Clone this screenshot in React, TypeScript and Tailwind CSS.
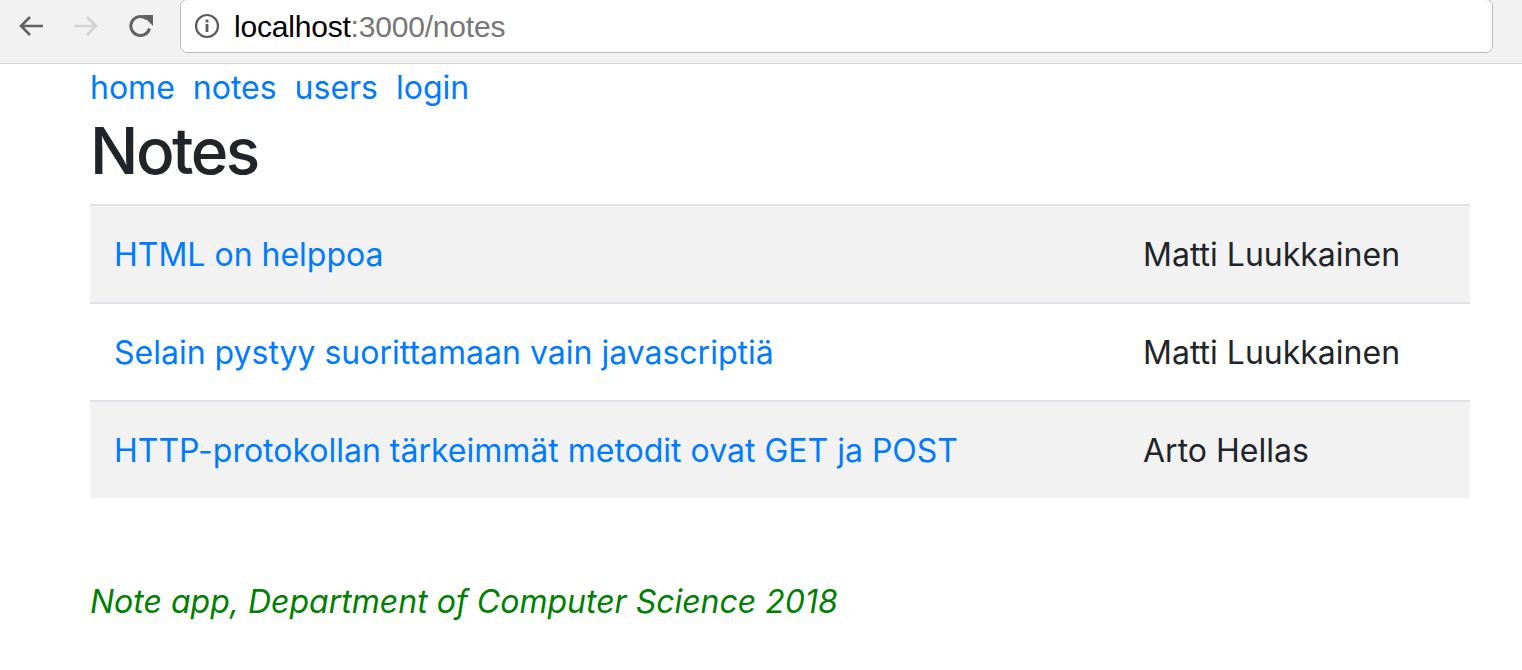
import React from "react";

const notes = [
  { title: "HTML on helppoa", user: "Matti Luukkainen" },
  { title: "Selain pystyy suorittamaan vain javascriptiä", user: "Matti Luukkainen" },
  { title: "HTTP-protokollan tärkeimmät metodit ovat GET ja POST", user: "Arto Hellas" },
];

function Back({ color }: { color: string }) {
  return (
    <svg width="28" height="28" viewBox="0 0 28 28" fill="none">
      <path d="M26 14H4M13 5L4 14L13 23" stroke={color} strokeWidth="2.6" />
    </svg>
  );
}

function Forward({ color }: { color: string }) {
  return (
    <svg width="28" height="28" viewBox="0 0 28 28" fill="none">
      <path d="M2 14H24M15 5L24 14L15 23" stroke={color} strokeWidth="2.6" />
    </svg>
  );
}

function Reload() {
  return (
    <svg width="28" height="28" viewBox="0 0 28 28" fill="none">
      <path d="M22.5 16.5A9.5 9.5 0 1 1 19.5 6.8" stroke="#626262" strokeWidth="3" />
      <path d="M15 3H26V14Z" fill="#626262" />
    </svg>
  );
}

function Info() {
  return (
    <svg width="26" height="26" viewBox="0 0 26 26" fill="none">
      <circle cx="13" cy="13" r="11" stroke="#5a5a5a" strokeWidth="2.2" />
      <rect x="11.6" y="11" width="2.8" height="8" fill="#5a5a5a" />
      <rect x="11.6" y="6.6" width="2.8" height="2.8" fill="#5a5a5a" />
    </svg>
  );
}

export default function App() {
  return (
    <div className="w-[1522px] h-[670px] bg-white overflow-hidden">
      <div className="h-[64px] bg-[#f2f2f2] border-b border-[#d6d6d6] flex items-start">
        <div className="flex items-center h-[52px] pl-[17px] gap-[27px]">
          <Back color="#626262" />
          <Forward color="#d2d2d2" />
          <Reload />
        </div>
        <div className="ml-[25px] mt-[-1px] w-[1313px] h-[54px] bg-white border border-[#bdbdbd] rounded-[7px] flex items-center pl-[13px]">
          <Info />
          <span className="ml-[14px] mt-[2px] text-[30px] leading-none font-['Liberation_Sans',Arial,sans-serif] tracking-[-0.2px]">
            <span className="text-black">localhost</span>
            <span className="text-[#777777]">:3000/notes</span>
          </span>
        </div>
      </div>

      <div className="ml-[90px] w-[1380px] font-['Inter','Noto_Sans',sans-serif] text-[#212529] text-[32px] leading-[48px]">
        <nav className="h-[48px] flex">
          <a className="text-[#007bff] pr-[18px]" href="#">home</a>
          <a className="text-[#007bff] pr-[18px]" href="#">notes</a>
          <a className="text-[#007bff] pr-[18px]" href="#">users</a>
          <a className="text-[#007bff]" href="#">login</a>
        </nav>
        <h2 className="text-[64px] leading-[78px] font-medium tracking-[-2.5px] mb-[14px]">Notes</h2>
        <table className="w-[1380px] border-collapse">
          <tbody>
            {notes.map((n, i) => (
              <tr key={i} className={i % 2 === 0 ? "bg-[#f2f2f2]" : "bg-white"}>
                <td className="border-t-2 border-[#dee2e6] pt-[25px] pb-[23px] px-[24px]">
                  <a className="text-[#007bff]" href="#">{n.title}</a>
                </td>
                <td className="border-t-2 border-[#dee2e6] pt-[25px] pb-[23px] px-[24px] w-[351px]">{n.user}</td>
              </tr>
            ))}
          </tbody>
        </table>
        <div className="mt-[80px] italic text-[#008000]">
          Note app, Department of Computer Science 2018
        </div>
      </div>
    </div>
  );
}
